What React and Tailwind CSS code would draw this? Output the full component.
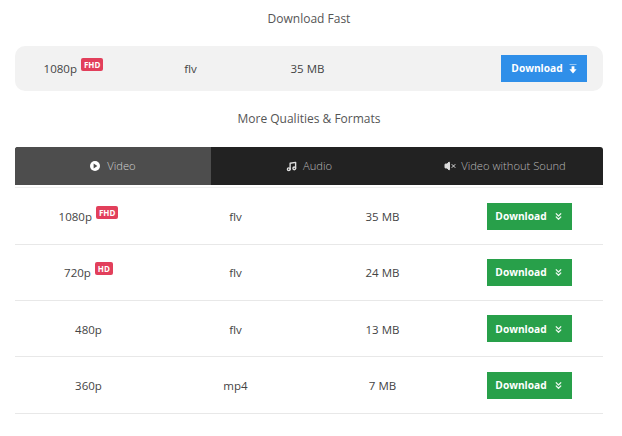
import React from "react";
import { Music, VolumeX, ChevronsDown } from "lucide-react";

function Badge({ children }) {
  return (
    <span className="relative -top-[5px] ml-[4px] inline-block rounded-[2px] bg-[#e23f5b] px-[3px] text-[8px] leading-[13px] font-bold text-white">
      {children}
    </span>
  );
}

function DownloadFastIcon() {
  return (
    <svg width="8" height="10" viewBox="0 0 8 10" className="shrink-0">
      <rect x="0.5" y="0" width="7" height="1" fill="#fff" opacity="0.5" />
      <path d="M2.6 2.2h2.8v3h2.2L4 9.4.4 5.2h2.2z" fill="#fff" />
    </svg>
  );
}

function PlayCircle() {
  return (
    <svg width="10" height="10" viewBox="0 0 10 10" className="shrink-0">
      <circle cx="5" cy="5" r="5" fill="#fff" />
      <path d="M3.6 2.6 7.4 5 3.6 7.4z" fill="#4d4d4d" />
    </svg>
  );
}

function Row({ q, badge, f, s }) {
  return (
    <div className="grid h-[56.33px] grid-cols-4 items-center border-b border-[#e8e8e8] text-center text-[11.5px] text-[#444]">
      <div className="pt-[1px]">
        {q}
        {badge && <Badge>{badge}</Badge>}
      </div>
      <div className="pt-[1px]">{f}</div>
      <div className="pt-[1px]">{s}</div>
      <div className="flex justify-center">
        <button className="flex h-[27px] w-[85px] items-center justify-center gap-[6px] bg-[#28a04a] pt-[1px] text-[10.2px] font-bold text-white">
          Download
          <ChevronsDown size={11} strokeWidth={2.6} className="opacity-90" />
        </button>
      </div>
    </div>
  );
}

export default function App() {
  return (
    <div className="h-[436px] w-[622px] overflow-hidden bg-white pr-[19px] pl-[15px] font-['Open_Sans',sans-serif]">
      <div className="flex h-[46px] items-center justify-center pb-[9px] text-[12px] text-[#555]">Download Fast</div>
      <div className="grid h-[45px] grid-cols-[117px_117px_117px_1fr] items-center rounded-[10px] bg-[#f2f2f2] text-center text-[11.5px] text-[#444]">
        <div className="pt-[1px]">
          1080p<Badge>FHD</Badge>
        </div>
        <div className="pt-[1px]">flv</div>
        <div className="pt-[1px]">35 MB</div>
        <div className="flex justify-end pr-[16px]">
          <button className="flex h-[27px] w-[86px] items-center justify-center gap-[6px] bg-[#2f8fe9] pt-[1px] text-[10.2px] font-bold text-white">
            Download
            <DownloadFastIcon />
          </button>
        </div>
      </div>
      <div className="flex h-[56px] items-center justify-center text-[12px] text-[#555]">More Qualities &amp; Formats</div>
      <div className="flex h-[38px] overflow-hidden rounded-t-[3px] bg-[#222] text-[11.2px] font-light">
        <div className="flex h-full w-[196px] items-center justify-center gap-[7px] bg-[#4d4d4d] text-[#d0d0d0]">
          <PlayCircle />
          Video
        </div>
        <div className="flex h-full flex-1 items-center justify-center gap-[6px] text-[#b8b8b8]">
          <Music size={11} strokeWidth={3} className="text-[#ddd]" />
          Audio
        </div>
        <div className="flex h-full w-[196px] items-center justify-center gap-[5px] text-[#b8b8b8]">
          <VolumeX size={12} fill="#ddd" className="text-[#ddd]" />
          Video without Sound
        </div>
      </div>
      <div className="h-[3.4px] border-b border-[#f0f0f0]"></div>
      <Row q="1080p" badge="FHD" f="flv" s="35 MB" />
      <Row q="720p" badge="HD" f="flv" s="24 MB" />
      <Row q="480p" f="flv" s="13 MB" />
      <Row q="360p" f="mp4" s="7 MB" />
    </div>
  );
}
